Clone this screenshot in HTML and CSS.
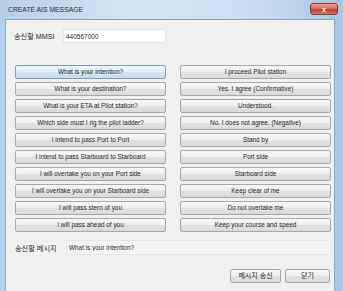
FILE: index.html
```html
<!DOCTYPE html>
<html lang="ko">
<head>
    <meta charset="UTF-8">
    <title>CREATE AIS MESSAGE</title>
    <link rel="stylesheet" href="styles.css">
</head>
<body>
    <div class="window">
        <div class="titlebar">
            <span class="title">CREATE AIS MESSAGE</span>
            <button class="close-btn">x</button>
        </div>
        <div class="client">
            <div class="mmsi-row">
                <label class="field-label">송신할 MMSI</label>
                <input class="mmsi-input" type="text" value="440567000">
            </div>

            <div class="msg-grid">
                <button class="msg-btn default">What is your intention?</button>
                <button class="msg-btn">I proceed Pilot station</button>
                <button class="msg-btn">What is your destination?</button>
                <button class="msg-btn">Yes. I agree (Confirmative)</button>
                <button class="msg-btn">What is your ETA at Pilot station?</button>
                <button class="msg-btn">Understood.</button>
                <button class="msg-btn">Which side must I rig the pilot ladder?</button>
                <button class="msg-btn">No. I does not agree. (Negative)</button>
                <button class="msg-btn">I intend to pass Port to Port</button>
                <button class="msg-btn">Stand by</button>
                <button class="msg-btn">I intend to pass Starboard to Starboard</button>
                <button class="msg-btn">Port side</button>
                <button class="msg-btn">I will overtake you on your Port side</button>
                <button class="msg-btn">Starboard side</button>
                <button class="msg-btn">I will overtake you on your Starboard side</button>
                <button class="msg-btn">Keep clear of me</button>
                <button class="msg-btn">I will pass stern of you</button>
                <button class="msg-btn">Do not overtake me</button>
                <button class="msg-btn">I will pass ahead of you</button>
                <button class="msg-btn">Keep your course and speed</button>
            </div>

            <div class="message-row">
                <label class="field-label">송신할 메시지</label>
                <input class="message-input" type="text" value="What is your intention?" readonly>
            </div>

            <div class="actions">
                <button class="action-btn send">메시지 송신</button>
                <button class="action-btn close">닫기</button>
            </div>
        </div>
    </div>
</body>
</html>
```

FILE: styles.css
```css
body {
    margin: 0;
    font-family: 'Liberation Sans', 'Noto Sans CJK KR', sans-serif;
    background-color: #bcd3ea;
}

.window {
    width: 343px;
    height: 291px;
    overflow: hidden;
    background: linear-gradient(to right, #b7cfe8 0%, #d6e5f4 40%, #c9dcef 75%, #a9c6e4 100%);
}

.titlebar {
    height: 19px;
    display: flex;
    align-items: flex-start;
    justify-content: space-between;
    padding: 0 5px 0 8px;
}

.title {
    font-size: 6.8px;
    color: #2e2e2e;
    margin-top: 6px;
}

.close-btn {
    width: 28px;
    height: 12px;
    margin-top: 3px;
    padding: 0;
    border: 1px solid #8a3a32;
    border-radius: 3px;
    background: linear-gradient(to bottom, #e8a195 0%, #d4705f 45%, #c0412e 55%, #d1735c 100%);
    color: #fff;
    font-size: 7px;
    font-weight: bold;
    line-height: 9px;
}

.client {
    width: 330px;
    height: 272px;
    margin-left: 5px;
    border: 1px solid #8fa6bf;
    border-bottom: none;
    background-color: #f0f0f0;
    padding: 9px 0 0 0;
    box-sizing: border-box;
}

.mmsi-row {
    display: flex;
    align-items: center;
    padding-left: 8px;
}

.field-label {
    font-size: 7.2px;
    color: #2a2a2a;
}

.mmsi-row .field-label {
    width: 49px;
}

.mmsi-input {
    width: 103px;
    height: 14px;
    padding: 0 2px;
    border: 1px solid #e2e2e2;
    background-color: white;
    font-family: inherit;
    font-size: 6.5px;
    color: #2a2a2a;
    box-sizing: border-box;
}

.msg-grid {
    display: grid;
    grid-template-columns: 151px 151px;
    grid-auto-rows: 14px;
    column-gap: 14px;
    row-gap: 3px;
    margin: 22px 0 0 9px;
}

.msg-btn,
.action-btn {
    padding: 0;
    border: 1px solid #a8a8a8;
    border-radius: 2px;
    background: linear-gradient(to bottom, #f6f6f6 0%, #efefef 48%, #e2e2e2 52%, #dadada 100%);
    font-family: inherit;
    font-size: 6.4px;
    color: #262626;
    line-height: 12px;
    white-space: nowrap;
}

.msg-btn.default {
    border-color: #7f9db9;
    background: linear-gradient(to bottom, #eef5fb 0%, #e3eef8 48%, #d3e3f1 52%, #c9dcec 100%);
}

.message-row {
    display: flex;
    align-items: center;
    margin: 8px 0 0 9px;
}

.message-row .field-label {
    width: 51px;
}

.message-input {
    width: 265px;
    height: 15px;
    padding: 0 2px;
    border: 1px solid #e6e6e6;
    background-color: #f5f5f5;
    font-family: inherit;
    font-size: 6.4px;
    color: #2a2a2a;
    box-sizing: border-box;
    outline: none;
}

.actions {
    display: flex;
    justify-content: flex-end;
    gap: 4px;
    margin: 14px 4px 0 0;
}

.action-btn {
    height: 14px;
    font-size: 7px;
}

.action-btn.send {
    width: 51px;
}

.action-btn.close {
    width: 45px;
}
```
